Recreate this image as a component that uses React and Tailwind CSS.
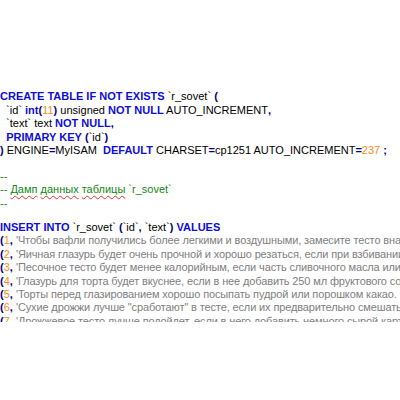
import React from "react";

const K = ({ children }) => <span className="font-bold text-[#0d0ddc]">{children}</span>;
const N = ({ children }) => <span className="text-[#ff8a1c]">{children}</span>;
const O = ({ children }) => <span className="font-bold text-[#000080]">{children}</span>;
const S = ({ children }) => <span className="text-[#808080] tracking-[-0.13px]">{children}</span>;
const W = ({ children }) => (
  <span className="underline decoration-wavy decoration-[#e53030] decoration-1 underline-offset-2">
    {children}
  </span>
);

const rows = [
  "'Чтобы вафли получились более легкими и воздушными, замесите тесто вначале на молоке, а затем'",
  "'Яичная глазурь будет очень прочной и хорошо резаться, если при взбивании добавить сок лимона'",
  "'Песочное тесто будет менее калорийным, если часть сливочного масла или маргарина заменить'",
  "'Глазурь для торта будет вкуснее, если в нее добавить 250 мл фруктового сока или ликера'",
  "'Торты перед глазированием хорошо посыпать пудрой или порошком какао. Тогда глазурь'",
  "'Сухие дрожжи лучше \"сработают\" в тесте, если их предварительно смешать с мукой'",
  "'Дрожжевое тесто лучше подойдет, если в него добавить немного сырой картошки'",
];

export default function App() {
  return (
    <div className="w-[400px] h-[400px] bg-white overflow-hidden">
      <div
        className="h-[322px] overflow-hidden whitespace-pre text-[11px] text-black pt-[90px]"
        style={{ fontFamily: '"Liberation Sans", Arial, sans-serif' }}
      >
        <div className="leading-[13.5px]">
          <div>
            <K>CREATE TABLE IF NOT EXISTS</K> `r_sovet` <O>(</O>
          </div>
          <div>
            {"  `id` "}
            <K>int</K>
            <O>(</O>
            <N>11</N>
            <O>)</O> unsigned <K>NOT NULL</K> AUTO_INCREMENT<O>,</O>
          </div>
          <div>
            {"  `text` text "}
            <K>NOT NULL</K>
            <O>,</O>
          </div>
          <div>
            {"  "}
            <K>PRIMARY KEY</K> <O>(</O>`id`<O>)</O>
          </div>
          <div>
            <O>)</O> ENGINE<O>=</O>MyISAM{"  "}
            <K>DEFAULT</K> CHARSET<O>=</O>cp1251 AUTO_INCREMENT<O>=</O>
            <N>237</N> <O>;</O>
          </div>
        </div>

        <div className="mt-[12px] leading-[13.5px] text-[#118a11]">
          <div>--</div>
          <div>
            -- <W>Дамп</W> <W>данных</W> <W>таблицы</W> `r_sovet`
          </div>
          <div>--</div>
        </div>

        <div className="mt-[11px] leading-[13.4px]">
          <div>
            <K>INSERT INTO</K> `r_sovet` <O>(</O>`id`<O>,</O> `text`<O>)</O> <K>VALUES</K>
          </div>
          {rows.map((text, i) => (
            <div key={i}>
              <O>(</O>
              <N>{i + 1}</N>
              <O>,</O> <S>{text}</S>
            </div>
          ))}
        </div>
      </div>
    </div>
  );
}
